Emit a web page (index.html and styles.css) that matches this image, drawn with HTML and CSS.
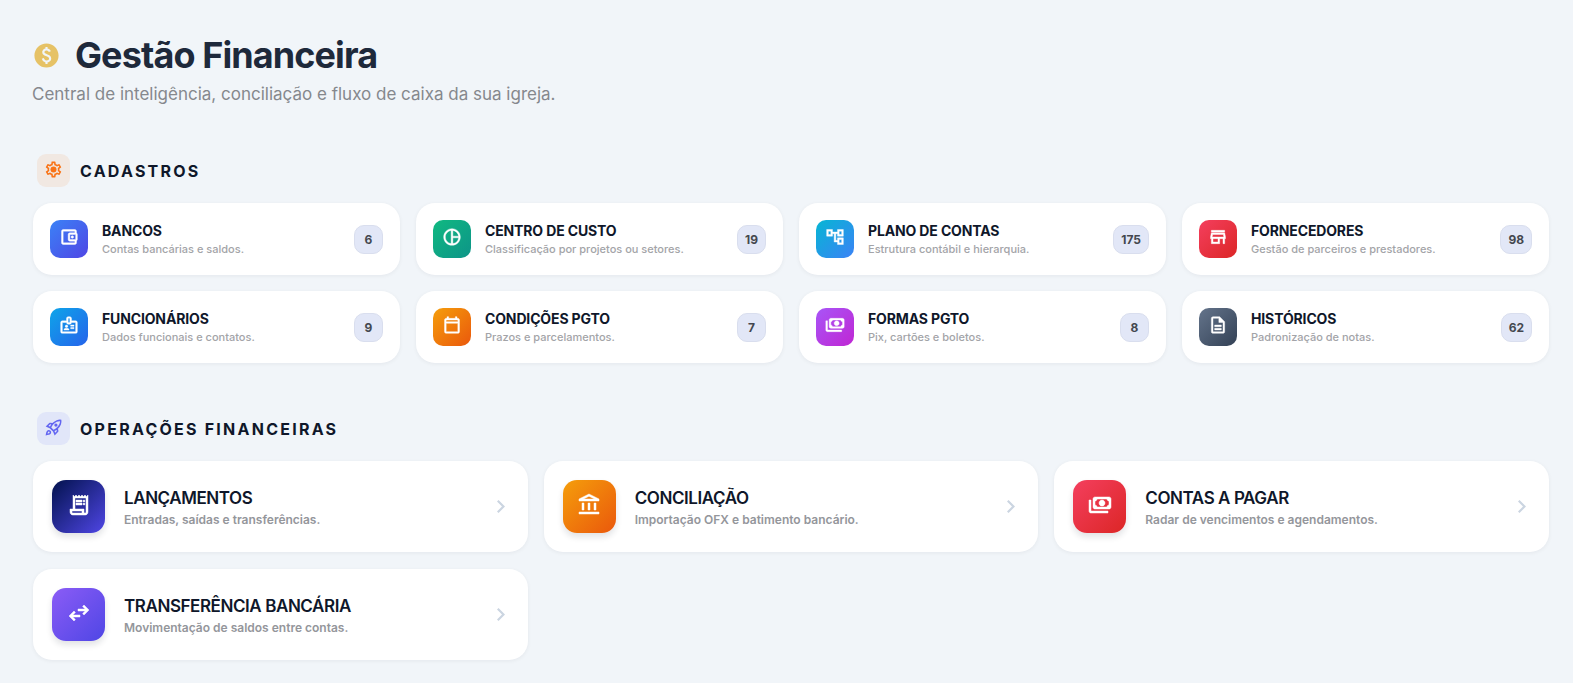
FILE: index.html
```html
<!DOCTYPE html>
<html lang="pt-BR">
<head>
<meta charset="utf-8">
<meta name="viewport" content="width=device-width, initial-scale=1">
<title>Gestão Financeira</title>
<link rel="stylesheet" href="styles.css">
</head>
<body>
<main class="page">
  <header class="page-header">
    <h1 class="page-title">
      <svg class="coin" viewBox="0 0 24 24" aria-hidden="true"><path d="M12 2C6.48 2 2 6.48 2 12s4.48 10 10 10 10-4.48 10-10S17.52 2 12 2zm.88 15.76V19h-1.75v-1.29c-.74-.18-2.39-.77-3.02-2.96l1.65-.67c.06.22.58 2.09 2.4 2.09.93 0 1.98-.48 1.98-1.61 0-.96-.7-1.46-2.28-2.03-1.1-.39-3.35-1.03-3.35-3.31 0-.1.01-2.4 2.62-2.96V5h1.75v1.24c1.84.32 2.51 1.79 2.66 2.23l-1.58.67c-.11-.35-.59-1.34-1.9-1.34-.7 0-1.81.37-1.81 1.39 0 .95.86 1.31 2.64 1.9 2.4.83 3.01 2.05 3.01 3.45 0 2.63-2.5 3.13-3.02 3.21z"/></svg>
      <span>Gestão Financeira</span>
    </h1>
    <p class="page-subtitle">Central de inteligência, conciliação e fluxo de caixa da sua igreja.</p>
  </header>

  <section class="section">
    <h2 class="section-title">
      <span class="section-icon section-icon-orange"><svg viewBox="0 0 24 24" aria-hidden="true"><path fill-rule="evenodd" d="M19.43 12.98c.04-.32.07-.64.07-.98 0-.34-.03-.66-.07-.98l2.11-1.65c.19-.15.24-.42.12-.64l-2-3.46a.5.5 0 0 0-.61-.22l-2.49 1c-.52-.4-1.08-.73-1.69-.98l-.38-2.65A.488.488 0 0 0 14 2h-4c-.25 0-.46.18-.49.42l-.38 2.65c-.61.25-1.17.59-1.69.98l-2.49-1a.5.5 0 0 0-.61.22l-2 3.46c-.13.22-.07.49.12.64l2.11 1.65c-.04.32-.07.65-.07.98 0 .33.03.66.07.98l-2.11 1.65c-.19.15-.24.42-.12.64l2 3.46a.5.5 0 0 0 .61.22l2.49-1c.52.4 1.08.73 1.69.98l.38 2.65c.03.24.24.42.49.42h4c.25 0 .46-.18.49-.42l.38-2.65c.61-.25 1.17-.59 1.69-.98l2.49 1a.5.5 0 0 0 .61-.22l2-3.46c.12-.22.07-.49-.12-.64l-2.11-1.65zm-1.98-1.71c.04.31.05.52.05.73 0 .21-.02.43-.05.73l-.14 1.13.89.7 1.08.84-.7 1.21-1.27-.51-1.04-.42-.9.68c-.43.32-.84.56-1.25.73l-1.06.43-.16 1.13-.2 1.35h-1.4l-.19-1.35-.16-1.13-1.06-.43c-.43-.18-.83-.41-1.23-.71l-.91-.7-1.06.43-1.27.51-.7-1.21 1.08-.84.89-.7-.14-1.13c-.03-.31-.05-.54-.05-.74s.02-.43.05-.73l.14-1.13-.89-.7-1.08-.84.7-1.21 1.27.51 1.04.42.9-.68c.43-.32.84-.56 1.25-.73l1.06-.43.16-1.13.2-1.35h1.39l.19 1.35.16 1.13 1.06.43c.43.18.83.41 1.23.71l.91.7 1.06-.43 1.27-.51.7 1.21-1.07.85-.89.7.14 1.13z"/><circle cx="12" cy="12" r="3.8"/></svg></span>
      <span>CADASTROS</span>
    </h2>
    <div class="grid grid-small">
      <a class="card" href="#bancos">
        <span class="tile tile-blue"><svg viewBox="0 0 24 24" aria-hidden="true"><path d="M21 7.28V5c0-1.1-.9-2-2-2H5a2 2 0 0 0-2 2v14c0 1.1.9 2 2 2h14c1.1 0 2-.9 2-2v-2.28A2 2 0 0 0 22 15V9c0-.74-.41-1.38-1-1.72zM20 9v6h-7V9h7zM5 19V5h14v2h-6c-1.1 0-2 .9-2 2v6c0 1.1.9 2 2 2h6v2H5z"/><circle cx="16" cy="12" r="1.5"/></svg></span>
        <span class="card-text"><span class="card-title">BANCOS</span><span class="card-desc">Contas bancárias e saldos.</span></span>
        <span class="badge">6</span>
      </a>
      <a class="card" href="#centro-de-custo">
        <span class="tile tile-green"><svg viewBox="0 0 24 24" aria-hidden="true"><path d="M12 2C6.48 2 2 6.48 2 12s4.48 10 10 10 10-4.48 10-10S17.52 2 12 2zm1 2.07c3.61.45 6.48 3.33 6.93 6.93H13V4.07zM4 12c0-4.06 3.07-7.44 7-7.93v15.87c-3.93-.5-7-3.88-7-7.94zm9 7.93V13h6.93A8.002 8.002 0 0 1 13 19.93z"/></svg></span>
        <span class="card-text"><span class="card-title">CENTRO DE CUSTO</span><span class="card-desc">Classificação por projetos ou setores.</span></span>
        <span class="badge">19</span>
      </a>
      <a class="card" href="#plano-de-contas">
        <span class="tile tile-cyan"><svg viewBox="0 0 24 24" aria-hidden="true"><path d="M22 11V3h-7v3H9V3H2v8h7V8h2v10h4v3h7v-8h-7v3h-2V8h2v3h7zM7 9H4V5h3v4zm10 6h3v4h-3v-4zm0-10h3v4h-3V5z"/></svg></span>
        <span class="card-text"><span class="card-title">PLANO DE CONTAS</span><span class="card-desc">Estrutura contábil e hierarquia.</span></span>
        <span class="badge">175</span>
      </a>
      <a class="card" href="#fornecedores">
        <span class="tile tile-red"><svg viewBox="0 0 24 24" aria-hidden="true"><path d="M18.36 9l.6 3H5.04l.6-3h12.72M20 4H4v2h16V4zm0 3H4l-1 5v2h1v6h10v-6h4v6h2v-6h1v-2l-1-5zM6 18v-4h6v4H6z"/></svg></span>
        <span class="card-text"><span class="card-title">FORNECEDORES</span><span class="card-desc">Gestão de parceiros e prestadores.</span></span>
        <span class="badge">98</span>
      </a>
      <a class="card" href="#funcionarios">
        <span class="tile tile-sky"><svg viewBox="0 0 24 24" aria-hidden="true"><path fill-rule="evenodd" d="M20 7h-5V4c0-1.1-.9-2-2-2h-2c-1.1 0-2 .9-2 2v3H4c-1.1 0-2 .9-2 2v11c0 1.1.9 2 2 2h16c1.1 0 2-.9 2-2V9c0-1.1-.9-2-2-2zM11 4h2v5h-2V4zm9 16H4V9h5c0 1.1.9 2 2 2h2c1.1 0 2-.9 2-2h5v11z"/><circle cx="9" cy="13.5" r="1.5"/><path d="M11.08 16.18C10.44 15.9 9.74 15.75 9 15.75s-1.44.15-2.08.43C6.36 16.42 6 16.96 6 17.57V18h6v-.43c0-.61-.36-1.15-.92-1.39zM14 12h4v1.5h-4zM14 15h4v1.5h-4z"/></svg></span>
        <span class="card-text"><span class="card-title">FUNCIONÁRIOS</span><span class="card-desc">Dados funcionais e contatos.</span></span>
        <span class="badge">9</span>
      </a>
      <a class="card" href="#condicoes-pgto">
        <span class="tile tile-amber"><svg viewBox="0 0 24 24" aria-hidden="true"><path d="M19 4h-1V2h-2v2H8V2H6v2H5c-1.11 0-1.99.9-1.99 2L3 20a2 2 0 0 0 2 2h14c1.1 0 2-.9 2-2V6c0-1.1-.9-2-2-2zm0 16H5V10h14v10zm0-12H5V6h14v2z"/></svg></span>
        <span class="card-text"><span class="card-title">CONDIÇÕES PGTO</span><span class="card-desc">Prazos e parcelamentos.</span></span>
        <span class="badge">7</span>
      </a>
      <a class="card" href="#formas-pgto">
        <span class="tile tile-purple"><svg viewBox="0 -960 960 960" aria-hidden="true"><path d="M560-440q-50 0-85-35t-35-85 35-85 85-35 85 35 35 85-35 85-85 35ZM280-320q-33 0-56.5-23.5T200-400v-320q0-33 23.5-56.5T280-800h560q33 0 56.5 23.5T920-720v320q0 33-23.5 56.5T840-320H280Zm80-80h400q0-33 23.5-56.5T840-480v-160q-33 0-56.5-23.5T760-720H360q0 33-23.5 56.5T280-640v160q33 0 56.5 23.5T360-400Zm440 240H120q-33 0-56.5-23.5T40-240v-440h80v440h680v80Z"/></svg></span>
        <span class="card-text"><span class="card-title">FORMAS PGTO</span><span class="card-desc">Pix, cartões e boletos.</span></span>
        <span class="badge">8</span>
      </a>
      <a class="card" href="#historicos">
        <span class="tile tile-slate"><svg viewBox="0 0 24 24" aria-hidden="true"><path d="M8 16h8v2H8zm0-4h8v2H8zm6-10H6c-1.1 0-2 .9-2 2v16c0 1.1.89 2 1.99 2H18c1.1 0 2-.9 2-2V8l-6-6zm4 18H6V4h7v5h5v11z"/></svg></span>
        <span class="card-text"><span class="card-title">HISTÓRICOS</span><span class="card-desc">Padronização de notas.</span></span>
        <span class="badge">62</span>
      </a>
    </div>
  </section>

  <section class="section">
    <h2 class="section-title">
      <span class="section-icon section-icon-indigo"><svg viewBox="0 -960 960 960" aria-hidden="true"><path d="m226-559 78 33q14-28 29-54t33-52l-56-11-84 84Zm142 83 114 113q42-16 90-49t90-75q70-70 109.5-155.5T806-800q-72-5-158 34.5T492-656q-42 42-75 90t-49 90Zm178-65q-23-23-23-56.5t23-56.5q23-23 57-23t57 23q23 23 23 56.5T660-541q-23 23-57 23t-57-23Zm19 321 84-84-11-56q-26 18-52 32.5T532-299l33 79Zm313-653q19 121-23.5 235.5T708-419l20 99q4 20-2 39t-20 33L538-80l-84-197-171-171-197-84 167-168q14-14 33.5-20t39.5-2l99 20q104-104 218-147t235-24ZM157-321q35-35 85.5-35.5T328-322q35 35 34.5 85.5T327-151q-25 25-83.5 43T82-76q14-103 32-161.5t43-83.5Zm57 56q-10 10-20 36.5T180-175q27-4 53.5-13.5T270-208q12-12 13-29t-11-29q-12-12-29-11.5T214-265Z"/></svg></span>
      <span>OPERAÇÕES FINANCEIRAS</span>
    </h2>
    <div class="grid grid-large">
      <a class="card card-large" href="#lancamentos">
        <span class="tile tile-large tile-navy"><svg viewBox="0 -960 960 960" aria-hidden="true"><path d="M240-80q-50 0-85-35t-35-85v-120h120v-560l60 60 60-60 60 60 60-60 60 60 60-60 60 60 60-60 60 60 60-60v680q0 50-35 85t-85 35H240Zm480-80q17 0 28.500-11.500T760-200v-560H320v440h360v120q0 17 11.500 28.500T720-160ZM360-600v-80h240v80H360Zm0 120v-80h240v80H360Zm320-120q-17 0-28.500-11.500T640-640q0-17 11.500-28.500T680-680q17 0 28.500 11.500T720-640q0 17-11.500 28.500T680-600Zm0 120q-17 0-28.500-11.500T640-520q0-17 11.500-28.500T680-560q17 0 28.500 11.500T720-520q0 17-11.500 28.500T680-480ZM240-160h360v-80H200v40q0 17 11.500 28.500T240-160Z"/></svg></span>
        <span class="card-text"><span class="card-title">LANÇAMENTOS</span><span class="card-desc">Entradas, saídas e transferências.</span></span>
        <svg class="chevron" viewBox="320 -720 296 480" aria-hidden="true"><path d="M504-480 320-664l56-56 240 240-240 240-56-56 184-184Z"/></svg>
      </a>
      <a class="card card-large" href="#conciliacao">
        <span class="tile tile-large tile-amber"><svg viewBox="0 -960 960 960" aria-hidden="true"><path d="M200-280v-280h80v280h-80Zm240 0v-280h80v280h-80ZM80-120v-80h800v80H80Zm600-160v-280h80v280h-80ZM80-640v-80l400-200 400 200v80H80Zm178-80h444L480-830 258-720Z"/></svg></span>
        <span class="card-text"><span class="card-title">CONCILIAÇÃO</span><span class="card-desc">Importação OFX e batimento bancário.</span></span>
        <svg class="chevron" viewBox="320 -720 296 480" aria-hidden="true"><path d="M504-480 320-664l56-56 240 240-240 240-56-56 184-184Z"/></svg>
      </a>
      <a class="card card-large" href="#contas-a-pagar">
        <span class="tile tile-large tile-red"><svg viewBox="0 -960 960 960" aria-hidden="true"><path d="M560-440q-50 0-85-35t-35-85 35-85 85-35 85 35 35 85-35 85-85 35ZM280-320q-33 0-56.500-23.500T200-400v-320q0-33 23.500-56.500T280-800h560q33 0 56.500 23.500T920-720v320q0 33-23.500 56.500T840-320H280Zm80-80h400q0-33 23.500-56.500T840-480v-160q-33 0-56.500-23.500T760-720H360q0 33-23.500 56.500T280-640v160q33 0 56.500 23.500T360-400Zm440 240H120q-33 0-56.500-23.500T40-240v-440h80v440h680v80Z"/></svg></span>
        <span class="card-text"><span class="card-title">CONTAS A PAGAR</span><span class="card-desc">Radar de vencimentos e agendamentos.</span></span>
        <svg class="chevron" viewBox="320 -720 296 480" aria-hidden="true"><path d="M504-480 320-664l56-56 240 240-240 240-56-56 184-184Z"/></svg>
      </a>
      <a class="card card-large" href="#transferencia-bancaria">
        <span class="tile tile-large tile-violet"><svg viewBox="0 -960 960 960" aria-hidden="true"><path d="M280-160 80-360l200-200 56 57-103 103h287v80H233l103 103-56 57Zm400-240-56-57 103-103H440v-80h287L624-743l56-57 200 200-200 200Z"/></svg></span>
        <span class="card-text"><span class="card-title">TRANSFERÊNCIA BANCÁRIA</span><span class="card-desc">Movimentação de saldos entre contas.</span></span>
        <svg class="chevron" viewBox="320 -720 296 480" aria-hidden="true"><path d="M504-480 320-664l56-56 240 240-240 240-56-56 184-184Z"/></svg>
      </a>
    </div>
  </section>
</main>
</body>
</html>
```
FILE: styles.css
```css
* {
  box-sizing: border-box;
}

body {
  margin: 0;
  background: #f1f5f9;
  color: #0f172a;
  font-family: Inter, "Liberation Sans", sans-serif;
}

svg {
  display: block;
  fill: currentColor;
}

.page {
  padding: 32px 24px 23px 33px;
}

.page-header {
  margin-bottom: 47px;
}

.page-title {
  display: flex;
  align-items: center;
  gap: 14px;
  margin: 0;
  color: #1e293b;
  font-size: 36px;
  font-weight: 700;
  line-height: 46px;
  letter-spacing: -0.025em;
}

.coin {
  width: 29px;
  height: 29px;
  margin-left: -1px;
  color: #e6c266;
}

.page-subtitle {
  margin: 4px 0 0 -1px;
  color: #85888d;
  font-size: 17px;
  line-height: 25px;
}

.section + .section {
  margin-top: 49px;
}

.section-title {
  display: flex;
  align-items: center;
  gap: 10px;
  margin: 0 0 16px;
  padding-left: 4px;
  font-size: 16px;
  font-weight: 700;
  line-height: 22px;
  letter-spacing: 0.14em;
}

.section-icon {
  display: grid;
  justify-items: center;
  width: 33px;
  height: 33px;
  padding-top: 6px;
  border-radius: 9px;
}

.section-icon svg {
  width: 19px;
  height: 19px;
}

.tile svg {
  stroke: currentColor;
  stroke-width: 2%;
}

.section-icon-orange {
  background: #f1e8e2;
  color: #f97316;
}

.section-icon-indigo {
  background: #e1e6f9;
  color: #6366f1;
}

.grid {
  display: grid;
  gap: 16px;
}

.grid-small {
  grid-template-columns: repeat(auto-fill, minmax(300px, 1fr));
}

.grid-large {
  grid-template-columns: repeat(auto-fill, minmax(380px, 1fr));
  row-gap: 17px;
}

.card {
  display: flex;
  align-items: center;
  gap: 14px;
  padding: 17px;
  border-radius: 19px;
  background: #fff;
  box-shadow: 0 1px 4px rgba(15, 23, 42, 0.06);
  color: inherit;
  text-decoration: none;
}

.card-large {
  gap: 19px;
  padding: 19px;
}

.tile {
  display: grid;
  justify-items: center;
  flex: none;
  width: 38px;
  height: 38px;
  padding-top: 7px;
  border-radius: 10px;
  color: #fff;
}

.tile svg {
  width: 20px;
  height: 20px;
}

.tile-large {
  width: 53px;
  height: 53px;
  padding-top: 13px;
  border-radius: 14px;
  box-shadow: 0 4px 6px rgba(15, 23, 42, 0.12);
}

.tile-large svg {
  width: 24px;
  height: 24px;
}

.tile-blue { background: linear-gradient(135deg, #3b82f6, #4f46e5); }
.tile-green { background: linear-gradient(135deg, #10b981, #0d9488); }
.tile-cyan { background: linear-gradient(135deg, #06b6d4, #3b82f6); }
.tile-red { background: linear-gradient(135deg, #f43f5e, #dc2626); }
.tile-sky { background: linear-gradient(135deg, #0ea5e9, #2563eb); }
.tile-amber { background: linear-gradient(135deg, #f59e0b, #ea580c); }
.tile-purple { background: linear-gradient(135deg, #a855f7, #c026d3); }
.tile-slate { background: linear-gradient(135deg, #64748b, #334155); }
.tile-navy { background: linear-gradient(135deg, #02124d, #4f46e5); }
.tile-violet { background: linear-gradient(135deg, #8b5cf6, #4f46e5); }

.card-text {
  display: flex;
  flex: 1;
  flex-direction: column;
  min-width: 0;
  padding-top: 2px;
}

.card-title {
  font-size: 14px;
  font-weight: 700;
  line-height: 18px;
  letter-spacing: -0.01em;
}

.card-desc {
  color: #a3a4a8;
  font-size: 11px;
  font-weight: 500;
  line-height: 18px;
}

.card-large .card-text {
  padding-top: 4px;
}

.card-large .card-title {
  font-size: 17px;
  font-weight: 600;
  line-height: 22px;
  letter-spacing: -0.025em;
}

.card-large .card-desc {
  color: #94969b;
  font-size: 12px;
  font-weight: 600;
  line-height: 22px;
}

.badge {
  min-width: 29px;
  padding: 0 7px;
  border: 1px solid #d9deee;
  border-radius: 10px;
  background: #e2e7f7;
  color: #44474f;
  font-size: 12px;
  font-weight: 700;
  line-height: 27px;
  text-align: center;
}

.chevron {
  flex: none;
  width: 8px;
  height: 13px;
  margin-right: 4px;
  color: #cbd5e1;
}
```
